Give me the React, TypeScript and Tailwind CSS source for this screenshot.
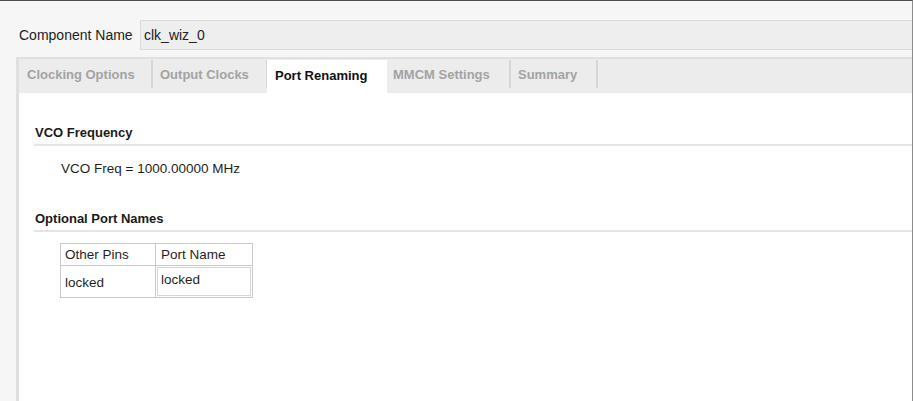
const tabs = [
  { label: 'Clocking Options', w: 'w-[132px]', pl: 'pl-[8px]' },
  { label: 'Output Clocks', w: 'w-[113px]', pl: 'pl-[7px]' },
];

const Sep = ({ w = 'w-[2px]' }: { w?: string }) => (
  <div className={`${w} h-[28px] self-start mt-[1px] bg-[#d6d6d6]`} />
);

const Tab = ({ label, w, pl, active = false }: { label: string; w: string; pl: string; active?: boolean }) => (
  <div
    className={`${w} ${pl} flex items-center pb-[2px] text-[13px] font-bold whitespace-nowrap ${
      active ? 'bg-white text-[#111] mt-[1px]' : 'text-[#a3a3a3]'
    }`}
  >
    {label}
  </div>
);

const SectionTitle = ({ children }: { children: string }) => (
  <div className="h-[22px] leading-[18px] pl-[1px] text-[13px] font-bold text-[#1a1a1a] border-b-2 border-[#e5e5e5]">
    {children}
  </div>
);

export default function App() {
  return (
    <div className="w-[913px] h-[401px] overflow-hidden flex flex-col bg-[#f6f6f6] border-t border-t-[#4d4d4d] border-r border-r-[#8c8c8c] font-['Liberation_Sans',Arial,sans-serif] text-[#1f1f1f]">
      <div className="flex items-center h-[30px] mt-[19px] pl-[19px]">
        <span className="w-[121px] text-[14px] text-[#222]">Component Name</span>
        <div className="flex-1 h-[30px] flex items-center pl-[3px] bg-[#eeeeee] border border-r-0 border-[#dadada] text-[14px] text-[#222]">
          clk_wiz_0
        </div>
      </div>

      <div className="flex-1 flex flex-col mt-[7px] ml-[16px] bg-white border-t-2 border-l-[3px] border-[#e0e0e0]">
        <div className="h-[34px] flex bg-[#ececec]">
          <Tab {...tabs[0]} />
          <Sep />
          <Tab {...tabs[1]} />
          <Sep w="w-[1px]" />
          <Tab label="Port Renaming" w="w-[120px]" pl="pl-[8px]" active />
          <Tab label="MMCM Settings" w="w-[122px]" pl="pl-[6px]" />
          <Sep />
          <Tab label="Summary" w="w-[85px]" pl="pl-[7px]" />
          <Sep />
        </div>

        <div className="pl-[15px] pt-[31px]">
          <SectionTitle>VCO Frequency</SectionTitle>
          <div className="mt-[15px] pl-[27px] h-[16px] leading-[16px] text-[13.5px]">VCO Freq = 1000.00000 MHz</div>

          <div className="mt-[33px]">
            <SectionTitle>Optional Port Names</SectionTitle>
          </div>

          <table className="mt-[11px] ml-[26px] border-collapse text-[13.5px] text-[#1f1f1f]">
            <tbody>
              <tr className="h-[22px]">
                <td className="w-[95px] pl-[4px] border border-[#c9c9c9] leading-[20px]">Other Pins</td>
                <td className="w-[97px] pl-[5px] border border-[#c9c9c9] leading-[20px]">Port Name</td>
              </tr>
              <tr className="h-[32px]">
                <td className="pl-[4px] pt-[3px] border border-[#c9c9c9]">locked</td>
                <td className="p-[1px] border border-[#c9c9c9]">
                  <div className="h-[29px] flex items-center pl-[3px] pb-[2px] bg-white border border-[#d6d6d6]">locked</div>
                </td>
              </tr>
            </tbody>
          </table>
        </div>
      </div>
    </div>
  );
}
